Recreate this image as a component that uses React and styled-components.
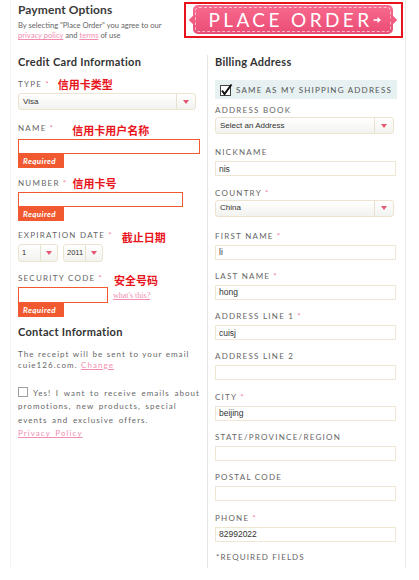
import React from "react";
import styled, { createGlobalStyle } from "styled-components";

const Global = createGlobalStyle`
  html, body { margin: 0; padding: 0; background: #fff; }
  body { font-family: Lato, "Noto Sans", sans-serif; color: #555; }
  * { box-sizing: border-box; }
`;

const Page = styled.div`
  width: 419px;
  height: 580px;
  overflow: hidden;
  background: #fff;
`;

const Sheet = styled.div`
  margin-left: 10px;
  width: 396px;
  height: 568px;
  border-left: 1px solid #f3f3f3;
  border-right: 1px solid #ebebeb;
  display: flex;
  flex-direction: column;
`;

const Header = styled.header`
  display: flex;
  justify-content: space-between;
  align-items: flex-start;
  height: 55px;
`;

const Intro = styled.div`
  padding: 3px 0 0 7px;
`;

const Title = styled.h1`
  margin: 0;
  font: 700 12px/14px Lato, sans-serif;
  letter-spacing: 0.1px;
  color: #3a3a3a;
`;

const Note = styled.p`
  margin: 3px 0 0;
  font: 400 7.6px/10px Lato, sans-serif;
  color: #666;
  white-space: nowrap;
`;

const Link = styled.a`
  color: #f28db0;
  text-decoration: underline;
`;

const SerifLink = styled.a`
  color: #f08fb2;
  text-decoration: underline;
  font: 8px/10px "Liberation Serif", serif;
  margin: 2px 0 0 5px;
  align-self: center;
`;

const OrderFrame = styled.div`
  margin: 2px 2px 0 0;
  width: 219px;
  height: 36px;
  border: 2px solid #e8141c;
  padding: 1px 5px 2px 4px;
  display: flex;
`;

const OrderButton = styled.button`
  position: relative;
  flex: 1;
  margin: 0 3px;
  border: none;
  border-radius: 5px;
  background: linear-gradient(#f86a8e, #ea4c75);
  color: #fff;
  font: 400 19px/1 Lato, sans-serif;
  letter-spacing: 3.4px;
  display: flex;
  align-items: center;
  justify-content: center;
  padding: 0 0 0 4px;
  cursor: pointer;

  &::before,
  &::after {
    content: "";
    position: absolute;
    top: 50%;
    width: 6px;
    height: 6px;
    background: #f15c82;
    transform: translate(0, -50%) rotate(45deg);
  }
  &::before { left: -3px; }
  &::after { right: -3px; }
`;

const Stitch = styled.span`
  position: absolute;
  inset: 2px;
  border: 1px dashed rgba(255, 255, 255, 0.6);
  border-radius: 4px;
  pointer-events: none;
`;

const Columns = styled.div`
  flex: 1;
  display: grid;
  grid-template-columns: 196px 1fr;
`;

const LeftCol = styled.section`
  padding: 0 0 0 7px;
`;

const RightCol = styled.section`
  border-left: 1px solid #e6e6e6;
  padding: 0 8px 0 7px;
`;

const SectionTitle = styled.h2`
  margin: ${(p) => p.$mt || 0}px 0 0;
  font: 700 11px/14px Lato, sans-serif;
  letter-spacing: 0.3px;
  color: #333;
`;

const Field = styled.div`
  margin-top: ${(p) => p.$mt}px;
`;

const Label = styled.div`
  display: flex;
  align-items: center;
  height: 10px;
  margin-bottom: ${(p) => p.$mb}px;
  font: 400 8px/10px Lato, sans-serif;
  letter-spacing: 1.25px;
  text-transform: uppercase;
  color: #666;
  white-space: nowrap;
`;

const Star = styled.span`
  color: #f27fa0;
  margin-left: 3px;
`;

const Annotation = styled.span`
  margin-left: ${(p) => p.$ml}px;
  margin-top: ${(p) => p.$dy || 0}px;
  font: 700 11px/10px "Noto Sans CJK SC", sans-serif;
  letter-spacing: 0;
  color: #e8141c;
`;

const SelectBox = styled.div`
  display: flex;
  width: ${(p) => p.$w}px;
  height: ${(p) => p.$h || 17}px;
  border: 1px solid #ece4d0;
  border-radius: 3px;
  background: linear-gradient(#ffffff, #f2f2ef);
  font: ${(p) => p.$fs || 8}px/1 "Liberation Sans", Arial, sans-serif;
  color: #333;
`;

const SelectValue = styled.span`
  flex: 1;
  min-width: 0;
  display: flex;
  align-items: center;
  padding-left: ${(p) => p.$pl}px;
  white-space: nowrap;
`;

const SelectArrow = styled.span`
  width: ${(p) => p.$aw}px;
  flex: none;
  border-left: 1px solid #e8e1cf;
  display: flex;
  align-items: center;
  justify-content: center;

  &::after {
    content: "";
    border-left: 3px solid transparent;
    border-right: 3px solid transparent;
    border-top: 4px solid #e35870;
  }
`;

const Row = styled.div`
  display: flex;
  gap: ${(p) => p.$gap || 0}px;
`;

const TextInput = styled.input`
  display: block;
  width: ${(p) => p.$w || 181}px;
  height: ${(p) => p.$h || 15}px;
  margin: 0;
  padding: 0 3px;
  border: 1px solid ${(p) => (p.$error ? "#f15a30" : "#efe7d4")};
  background: #fff;
  font: 8.5px/1 "Liberation Sans", Arial, sans-serif;
  color: #333;
  outline: none;
`;

const RequiredTag = styled.div`
  width: 46px;
  height: 14px;
  background: #f15a30;
  color: #fff;
  font: italic 700 8px/14px Lato, sans-serif;
  letter-spacing: 0.4px;
  padding-left: 5px;
`;

const Para = styled.p`
  margin: ${(p) => p.$mt}px 0 0;
  font: 400 8px/${(p) => p.$lh}px Lato, sans-serif;
  letter-spacing: 1.05px;
  word-spacing: ${(p) => p.$ws}px;
  color: #666;
  white-space: nowrap;
`;

const Box = styled.span`
  display: inline-block;
  width: 10px;
  height: 10px;
  border: 1px solid #a0a0a0;
  background: #fff;
  vertical-align: -1px;
  margin-right: 5px;
`;

const Band = styled.div`
  margin-top: 11px;
  height: 19px;
  background: #e7f1f2;
  display: flex;
  align-items: center;
  gap: 2px;
  padding-left: 5px;
  font: 400 8px/1 Lato, sans-serif;
  letter-spacing: 1.2px;
  color: #555;
  white-space: nowrap;
`;

const Footnote = styled.div`
  margin-top: 10px;
  padding-left: 1px;
  font: 400 8px/10px Lato, sans-serif;
  letter-spacing: 1.1px;
  color: #666;
`;

const Select = ({ w, h, value, small }) => (
  <SelectBox $w={w} $h={h} $fs={small ? 7.5 : 8}>
    <SelectValue $pl={small ? 3 : 4}>{value}</SelectValue>
    <SelectArrow $aw={small ? 17 : 19} />
  </SelectBox>
);

const rightFields = [
  { label: "Nickname", value: "nis", mt: 13 },
  { label: "Country", req: true, select: "China", mt: 11.5 },
  { label: "First Name", req: true, value: "li", mt: 14 },
  { label: "Last Name", req: true, value: "hong", mt: 11.3 },
  { label: "Address Line 1", req: true, value: "cuisj", mt: 11.3 },
  { label: "Address Line 2", value: "", mt: 11.3 },
  { label: "City", req: true, value: "beijing", mt: 11.3 },
  { label: "State/Province/Region", value: "", mt: 11.3 },
  { label: "Postal Code", value: "", mt: 11.3 },
  { label: "Phone", req: true, value: "82992022", mt: 11.3 },
];

export default function App() {
  return (
    <Page>
      <Global />
      <Sheet>
        <Header>
          <Intro>
            <Title>Payment Options</Title>
            <Note>
              By selecting "Place Order" you agree to our
              <br />
              <Link>privacy policy</Link> and <Link>terms</Link> of use
            </Note>
          </Intro>
          <OrderFrame>
            <OrderButton>
              <Stitch />
              PLACE ORDER
              <svg width="9" height="8" viewBox="0 0 9 8">
                <path d="M0.5 4H6.5" stroke="#fff" strokeWidth="1.6" />
                <path d="M4.5 1L8 4L4.5 7Z" fill="#fff" />
              </svg>
            </OrderButton>
          </OrderFrame>
        </Header>

        <Columns>
          <LeftCol>
            <SectionTitle>Credit Card Information</SectionTitle>

            <Field $mt={10}>
              <Label $mb={4}>
                Type<Star>*</Star>
                <Annotation $ml={8}>信用卡类型</Annotation>
              </Label>
              <Select w={178} value="Visa" />
            </Field>

            <Field $mt={13}>
              <Label $mb={6}>
                Name<Star>*</Star>
                <Annotation $ml={18} $dy={3}>信用卡用户名称</Annotation>
              </Label>
              <TextInput $w={182} $error readOnly />
              <RequiredTag>Required</RequiredTag>
            </Field>

            <Field $mt={10}>
              <Label $mb={4}>
                Number<Star>*</Star>
                <Annotation $ml={5}>信用卡号</Annotation>
              </Label>
              <TextInput $w={165} $error readOnly />
              <RequiredTag>Required</RequiredTag>
            </Field>

            <Field $mt={9}>
              <Label $mb={4}>
                Expiration Date<Star>*</Star>
                <Annotation $ml={9} $dy={3}>截止日期</Annotation>
              </Label>
              <Row $gap={5}>
                <Select w={40} h={18} value="1" small />
                <Select w={40} h={18} value="2011" small />
              </Row>
            </Field>

            <Field $mt={11}>
              <Label $mb={4}>
                Security Code<Star>*</Star>
                <Annotation $ml={11} $dy={3}>安全号码</Annotation>
              </Label>
              <Row>
                <TextInput $w={90} $h={16} $error readOnly />
                <SerifLink>what's this?</SerifLink>
              </Row>
              <RequiredTag>Required</RequiredTag>
            </Field>

            <SectionTitle $mt={8}>Contact Information</SectionTitle>
            <Para $mt={9.5} $lh={11} $ws={0.4}>
              The receipt will be sent to your email
              <br />
              cuie126.com. <Link>Change</Link>
            </Para>
            <Para $mt={16} $lh={13.5} $ws={1.6}>
              <Box />
              Yes! I want to receive emails about
              <br />
              promotions, new products, special
              <br />
              events and exclusive offers.
              <br />
              <Link>Privacy Policy</Link>
            </Para>
          </LeftCol>

          <RightCol>
            <SectionTitle>Billing Address</SectionTitle>
            <Band>
              <svg width="14" height="14" viewBox="0 0 14 14">
                <rect x="0.5" y="2.5" width="10" height="10" fill="#fff" stroke="#444" />
                <path d="M2 7.5L4.5 11L11.5 1.5" fill="none" stroke="#111" strokeWidth="2" />
              </svg>
              SAME AS MY SHIPPING ADDRESS
            </Band>

            <Field $mt={6}>
              <Label $mb={2}>Address Book</Label>
              <Select w={179} value="Select an Address" />
            </Field>

            {rightFields.map((f) => (
              <Field key={f.label} $mt={f.mt}>
                <Label $mb={f.select ? 2 : 4}>
                  {f.label}
                  {f.req && <Star>*</Star>}
                </Label>
                {f.select ? (
                  <Select w={179} value={f.select} />
                ) : (
                  <TextInput defaultValue={f.value} readOnly />
                )}
              </Field>
            ))}

            <Footnote>*REQUIRED FIELDS</Footnote>
          </RightCol>
        </Columns>
      </Sheet>
    </Page>
  );
}
